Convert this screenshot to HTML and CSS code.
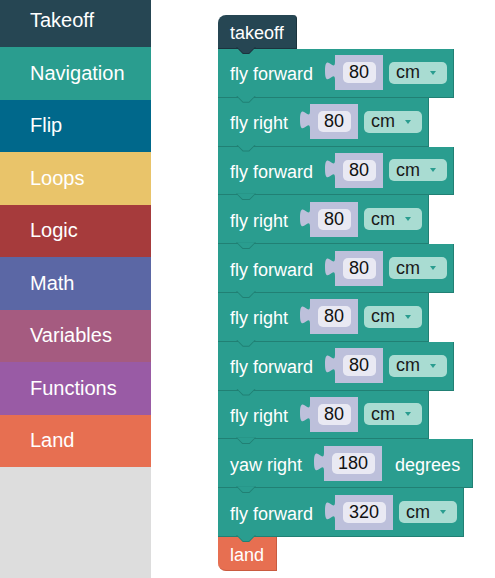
FILE: index.html
```html
<!DOCTYPE html>
<html>
<head>
<meta charset="utf-8">
<link rel="stylesheet" href="styles.css">
</head>
<body>
<div class="app">
  <nav class="toolbox">
    <ul class="cats">
      <li class="cat c-takeoff">Takeoff</li>
      <li class="cat c-nav">Navigation</li>
      <li class="cat c-flip">Flip</li>
      <li class="cat c-loops">Loops</li>
      <li class="cat c-logic">Logic</li>
      <li class="cat c-math">Math</li>
      <li class="cat c-vars">Variables</li>
      <li class="cat c-funcs">Functions</li>
      <li class="cat c-land">Land</li>
    </ul>
  </nav>
  <main class="workspace">
    <div class="stack">
      <div class="blk hat"><span class="lbl">takeoff</span></div>

      <div class="blk"><span class="lbl">fly forward</span><span class="slot"><svg class="tab" width="10" height="35" viewBox="0 0 10 35"><path d="M10,6.5 c0,12.5 -10,-10 -10,9.4 s10,-3.1 10,9.4 z"/></svg><span class="num">80</span></span><span class="dd">cm<i class="arr"></i></span></div>

      <div class="blk"><span class="lbl">fly right</span><span class="slot"><svg class="tab" width="10" height="35" viewBox="0 0 10 35"><path d="M10,6.5 c0,12.5 -10,-10 -10,9.4 s10,-3.1 10,9.4 z"/></svg><span class="num">80</span></span><span class="dd">cm<i class="arr"></i></span></div>

      <div class="blk"><span class="lbl">fly forward</span><span class="slot"><svg class="tab" width="10" height="35" viewBox="0 0 10 35"><path d="M10,6.5 c0,12.5 -10,-10 -10,9.4 s10,-3.1 10,9.4 z"/></svg><span class="num">80</span></span><span class="dd">cm<i class="arr"></i></span></div>

      <div class="blk"><span class="lbl">fly right</span><span class="slot"><svg class="tab" width="10" height="35" viewBox="0 0 10 35"><path d="M10,6.5 c0,12.5 -10,-10 -10,9.4 s10,-3.1 10,9.4 z"/></svg><span class="num">80</span></span><span class="dd">cm<i class="arr"></i></span></div>

      <div class="blk"><span class="lbl">fly forward</span><span class="slot"><svg class="tab" width="10" height="35" viewBox="0 0 10 35"><path d="M10,6.5 c0,12.5 -10,-10 -10,9.4 s10,-3.1 10,9.4 z"/></svg><span class="num">80</span></span><span class="dd">cm<i class="arr"></i></span></div>

      <div class="blk"><span class="lbl">fly right</span><span class="slot"><svg class="tab" width="10" height="35" viewBox="0 0 10 35"><path d="M10,6.5 c0,12.5 -10,-10 -10,9.4 s10,-3.1 10,9.4 z"/></svg><span class="num">80</span></span><span class="dd">cm<i class="arr"></i></span></div>

      <div class="blk"><span class="lbl">fly forward</span><span class="slot"><svg class="tab" width="10" height="35" viewBox="0 0 10 35"><path d="M10,6.5 c0,12.5 -10,-10 -10,9.4 s10,-3.1 10,9.4 z"/></svg><span class="num">80</span></span><span class="dd">cm<i class="arr"></i></span></div>

      <div class="blk"><span class="lbl">fly right</span><span class="slot"><svg class="tab" width="10" height="35" viewBox="0 0 10 35"><path d="M10,6.5 c0,12.5 -10,-10 -10,9.4 s10,-3.1 10,9.4 z"/></svg><span class="num">80</span></span><span class="dd">cm<i class="arr"></i></span></div>

      <div class="blk text-end"><span class="lbl">yaw right</span><span class="slot"><svg class="tab" width="10" height="35" viewBox="0 0 10 35"><path d="M10,6.5 c0,12.5 -10,-10 -10,9.4 s10,-3.1 10,9.4 z"/></svg><span class="num">180</span></span><span class="lbl unit">degrees</span></div>

      <div class="blk"><span class="lbl">fly forward</span><span class="slot"><svg class="tab" width="10" height="35" viewBox="0 0 10 35"><path d="M10,6.5 c0,12.5 -10,-10 -10,9.4 s10,-3.1 10,9.4 z"/></svg><span class="num">320</span></span><span class="dd">cm<i class="arr"></i></span></div>

      <div class="blk land"><span class="lbl">land</span></div>
    </div>
  </main>
</div>
</body>
</html>
```

FILE: styles.css
```css
html, body {
  margin: 0;
  padding: 0;
  background: #ffffff;
}

body {
  font-family: "Liberation Sans", Arial, sans-serif;
}

.app {
  display: flex;
  height: 578px;
  overflow: hidden;
}

/* ---------- toolbox ---------- */
.toolbox {
  flex: none;
  width: 151px;
  background: #dddddd;
  overflow: hidden;
}

.cats {
  list-style: none;
  margin: -5.5px 0 0 0;
  padding: 0;
}

.cat {
  display: flex;
  align-items: center;
  height: 52.5px;
  padding-left: 30px;
  color: #ffffff;
  font-size: 20px;
}

.c-takeoff { background: #264653; }
.c-nav     { background: #2a9d8f; }
.c-flip    { background: #00688b; }
.c-loops   { background: #e9c46a; }
.c-logic   { background: #a63b3c; }
.c-math    { background: #5b67a5; }
.c-vars    { background: #a55b80; }
.c-funcs   { background: #995ba5; }
.c-land    { background: #e76f51; }

/* ---------- workspace ---------- */
.workspace {
  flex: 1;
  padding: 15px 0 0 67px;
}

.stack {
  display: flex;
  flex-direction: column;
  align-items: flex-start;
}

.blk {
  position: relative;
  display: flex;
  align-items: center;
  box-sizing: border-box;
  height: 48.8px;
  padding: 0 6px 0 12px;
  background: #2a9d8f;
  color: #ffffff;
  font-size: 18px;
  border-right: 1px solid #218074;
  border-bottom: 1px solid #218074;
  white-space: nowrap;
}

.lbl {
  padding-top: 4px;
}

/* next-statement tab hanging below a block */
.blk::before,
.blk::after {
  content: "";
  position: absolute;
  z-index: 1;
  clip-path: polygon(0 0, 100% 0, 66% 100%, 34% 100%);
}

.blk::before {
  left: 18px;
  bottom: -6px;
  width: 20px;
  height: 7px;
  background: #218074;
}

.blk::after {
  left: 19px;
  bottom: -5px;
  width: 18px;
  height: 6px;
  background: #2a9d8f;
}

.hat {
  height: 34px;
  padding: 0 12px;
  background: #264653;
  border-radius: 8px 4px 0 0;
  border-color: #1b333d;
}

.hat::before { background: #1b333d; }
.hat::after { background: #264653; }

.land {
  height: 34px;
  padding: 0 12px;
  background: #e76f51;
  border-radius: 0 0 0 8px;
  border-color: #c95a3f;
}

.land::before,
.land::after {
  display: none;
}

.text-end {
  padding-right: 12px;
}

/* value input with shadow number */
.slot {
  position: relative;
  display: flex;
  align-items: center;
  box-sizing: border-box;
  height: 35px;
  margin-left: 22px;
  padding: 0 7.5px;
  background: #bdc0db;
}

.tab {
  position: absolute;
  left: -10px;
  top: 0;
  overflow: visible;
}

.tab path {
  fill: #bdc0db;
}

.num {
  display: flex;
  align-items: center;
  height: 21px;
  padding: 0 6.5px;
  border-radius: 5px;
  background: #e9e9f3;
  color: #111111;
}

/* dropdown field */
.dd {
  display: flex;
  align-items: center;
  height: 22px;
  margin-left: 6px;
  padding: 0 11px 0 7px;
  border-radius: 5px;
  background: #a9dcd2;
  color: #1a1a1a;
}

.arr {
  display: block;
  width: 0;
  height: 0;
  margin-left: 10px;
  border-left: 3px solid transparent;
  border-right: 3px solid transparent;
  border-top: 4px solid #2a9d8f;
}

.unit {
  margin-left: 13px;
}
```
